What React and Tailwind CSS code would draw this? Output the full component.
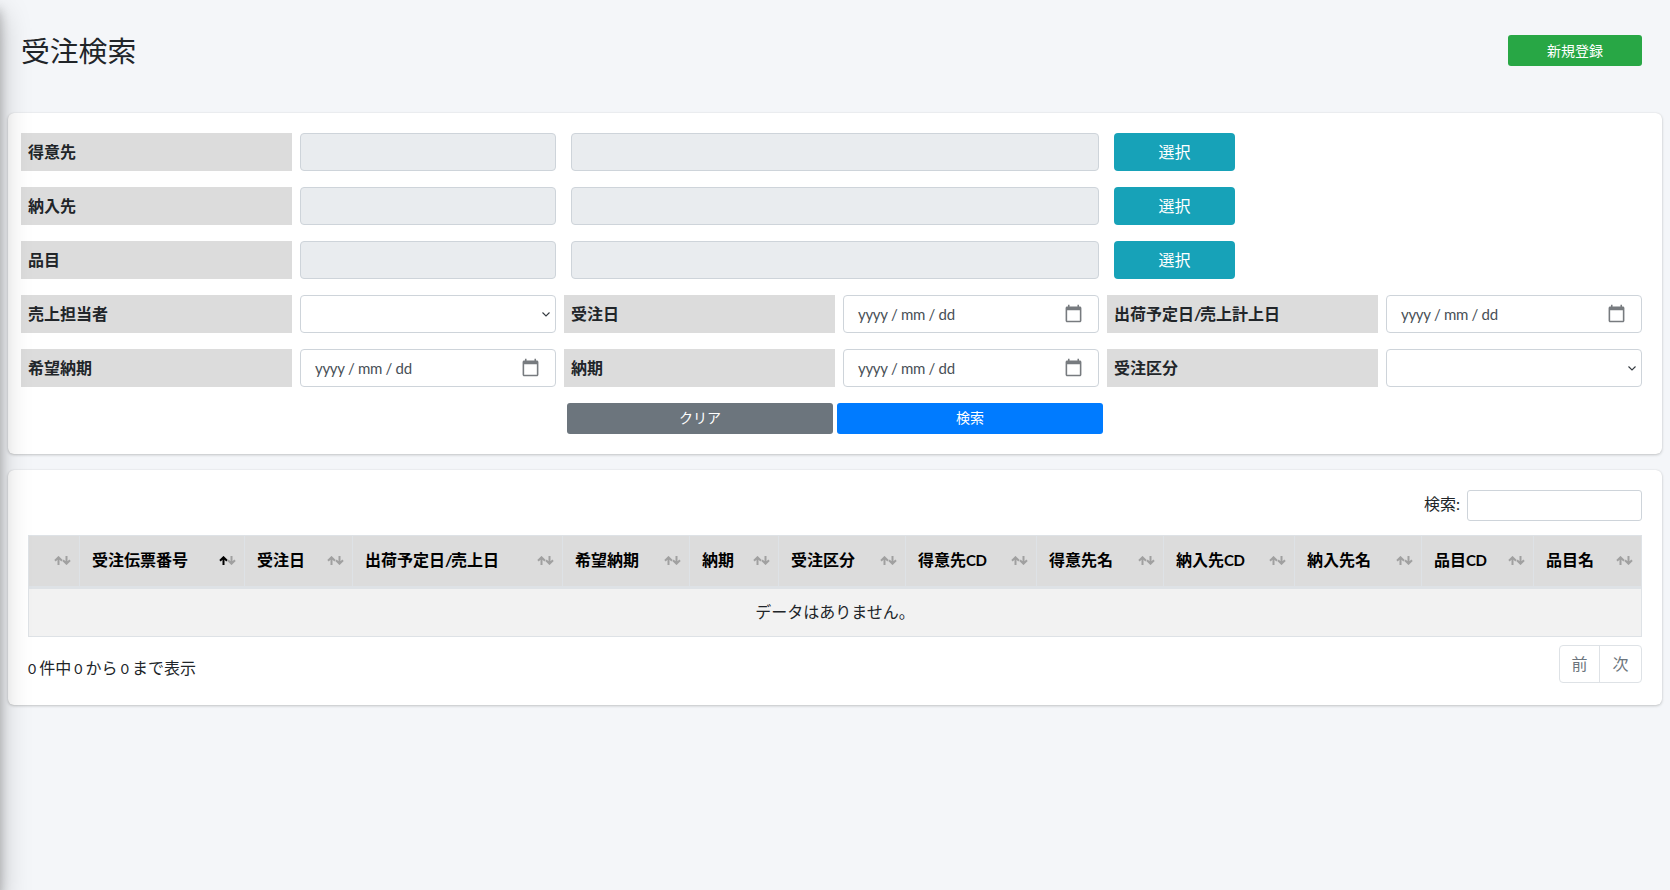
const columns = [
  { title: "", width: "w-[51px]" },
  { title: "受注伝票番号", width: "w-[165px]", sorted: true },
  { title: "受注日", width: "w-[108px]" },
  { title: "出荷予定日", rest: "売上日", width: "w-[210px]" },
  { title: "希望納期", width: "w-[127px]" },
  { title: "納期", width: "w-[89px]" },
  { title: "受注区分", width: "w-[127px]" },
  { title: "得意先", code: "CD", width: "w-[131px]" },
  { title: "得意先名", width: "w-[127px]" },
  { title: "納入先", code: "CD", width: "w-[131px]" },
  { title: "納入先名", width: "w-[127px]" },
  { title: "品目", code: "CD", width: "w-[112px]" },
  { title: "品目名", width: "w-[108px]" },
];

const Slash = () => <span className="tracking-[-1.5px]">/</span>;

const Zero = () => <span className="text-sm">0</span>;

const SortIcon = ({ active }) => (
  <svg viewBox="0 0 17 9" className="w-[17px] h-[9px] shrink-0" fill="none" strokeWidth="2">
    <path d="M4.5 9V1.2M1 4.8l3.5-3.5L8 4.8" stroke={active ? "#000" : "#a0a0a0"} />
    <path d="M12.5 0v7.8M9 4.2l3.5 3.5L16 4.2" stroke="#a0a0a0" />
  </svg>
);

const CalendarIcon = () => (
  <svg viewBox="0 0 24 24" className="w-[19px] h-[19px] shrink-0 -mt-[2px]" fill="#777b7f">
    <path d="M20 3h-1V1h-2v2H7V1H5v2H4c-1.1 0-2 .9-2 2v16c0 1.1.9 2 2 2h16c1.1 0 2-.9 2-2V5c0-1.1-.9-2-2-2zm0 18H4V8h16v13z" />
  </svg>
);

const Label = ({ children }) => (
  <div className="h-[38px] bg-[#dcdcdc] px-[7px] flex items-center font-bold text-[#212529] whitespace-nowrap">
    {children}
  </div>
);

const DateField = () => (
  <div className="h-[38px] bg-white border border-[#ced4da] rounded flex items-center justify-between pl-[14px] pr-[15px] text-[#495057]">
    <span className="text-[15px] tracking-[-0.3px]">yyyy / mm / dd</span>
    <CalendarIcon />
  </div>
);

const SelectField = () => (
  <div className="h-[38px] bg-white border border-[#ced4da] rounded flex items-center justify-end pr-[4px]">
    <svg viewBox="0 0 10 10" className="w-[10px] h-[10px]" fill="none" stroke="#343a40" strokeWidth="1.1">
      <path d="M1.5 3.5 5 7l3.5-3.5" />
    </svg>
  </div>
);

const PickerRow = ({ label }) => (
  <div className="flex">
    <div className="w-[271px]">
      <Label>{label}</Label>
    </div>
    <div className="w-[256px] ml-2 h-[38px] bg-[#e9ecef] border border-[#ced4da] rounded" />
    <div className="w-[528px] ml-[15px] h-[38px] bg-[#e9ecef] border border-[#ced4da] rounded" />
    <button className="w-[121px] ml-[15px] h-[38px] bg-[#17a2b8] text-white rounded">選択</button>
  </div>
);

export default function App() {
  return (
    <div className="relative min-h-screen overflow-hidden bg-[#f4f6f9] font-['Lato','Noto_Sans_CJK_JP',sans-serif] text-base text-[#212529]">
      {/* off-canvas sidebar, only its shadow is visible */}
      <div className="absolute -left-[250px] top-0 w-[250px] h-full z-10 shadow-[0_14px_28px_rgba(0,0,0,0.25),0_10px_10px_rgba(0,0,0,0.22)]" />

      <div className="px-2">
        <div className="h-[101px] mb-[12px] pl-[13px] pr-5 flex items-center justify-between">
          <h3 className="text-[28.8px] leading-tight mt-[3px]">受注検索</h3>
          <button className="w-[134px] h-[31px] bg-[#28a745] text-white text-sm rounded-[3px]">新規登録</button>
        </div>

        <div className="bg-white rounded-md shadow-[0_0_1px_rgba(0,0,0,0.125),0_1px_3px_rgba(0,0,0,0.2)] pt-5 pb-5 pl-[13px] pr-5">
          <div className="flex flex-col gap-4">
            <PickerRow label="得意先" />
            <PickerRow label="納入先" />
            <PickerRow label="品目" />
            <div className="grid grid-cols-[271px_256px_271px_256px_271px_256px] gap-x-2 gap-y-4">
              <Label>売上担当者</Label>
              <SelectField />
              <Label>受注日</Label>
              <DateField />
              <Label>
                出荷予定日<Slash />売上計上日
              </Label>
              <DateField />
              <Label>希望納期</Label>
              <DateField />
              <Label>納期</Label>
              <DateField />
              <Label>受注区分</Label>
              <SelectField />
            </div>
          </div>
          <div className="flex gap-1 mt-4 ml-[546px] text-sm text-white">
            <button className="w-[266px] h-[31px] pb-[2px] bg-[#6c757d] rounded-[3px]">クリア</button>
            <button className="w-[266px] h-[31px] pb-[2px] bg-[#007bff] rounded-[3px]">検索</button>
          </div>
        </div>

        <div className="mt-4 bg-white rounded-md shadow-[0_0_1px_rgba(0,0,0,0.125),0_1px_3px_rgba(0,0,0,0.2)] pt-5 pb-[22px] px-5">
          <div className="flex items-center justify-end gap-[7px]">
            <span className="mb-1">検索:</span>
            <div className="w-[175px] h-[31px] bg-white border border-[#ced4da] rounded-[3px]" />
          </div>

          <table className="w-[1613px] table-fixed border-collapse mt-[14px]">
            <thead>
              <tr>
                {columns.map((col, i) => (
                  <th
                    key={i}
                    className={`${col.width} h-[52px] bg-[#dcdcdc] border border-[#dee2e6] border-b-[3px] pl-3 pr-2 pb-[2px] font-bold text-black text-left`}
                  >
                    <div className="flex items-center justify-between whitespace-nowrap">
                      <span>
                        {col.title}
                        {col.rest && <Slash />}
                        {col.rest}
                        {col.code && <span className="text-[15px] tracking-[-0.4px]">{col.code}</span>}
                      </span>
                      <SortIcon active={col.sorted} />
                    </div>
                  </th>
                ))}
              </tr>
            </thead>
            <tbody>
              <tr>
                <td colSpan={13} className="h-[49px] pb-[2px] bg-[#f2f2f2] border border-[#dee2e6] text-center">
                  データはありません。
                </td>
              </tr>
            </tbody>
          </table>

          <div className="flex items-center justify-between mt-2">
            <span className="mt-2 [word-spacing:-1px]">
              <Zero /> 件中 <Zero /> から <Zero /> まで表示
            </span>
            <div className="flex h-[38px] border border-[#dee2e6] rounded text-[#6c757d]">
              <span className="w-[40px] pb-px flex items-center justify-center border-r border-[#dee2e6]">前</span>
              <span className="w-[41px] pb-px flex items-center justify-center">次</span>
            </div>
          </div>
        </div>
      </div>
    </div>
  );
}
